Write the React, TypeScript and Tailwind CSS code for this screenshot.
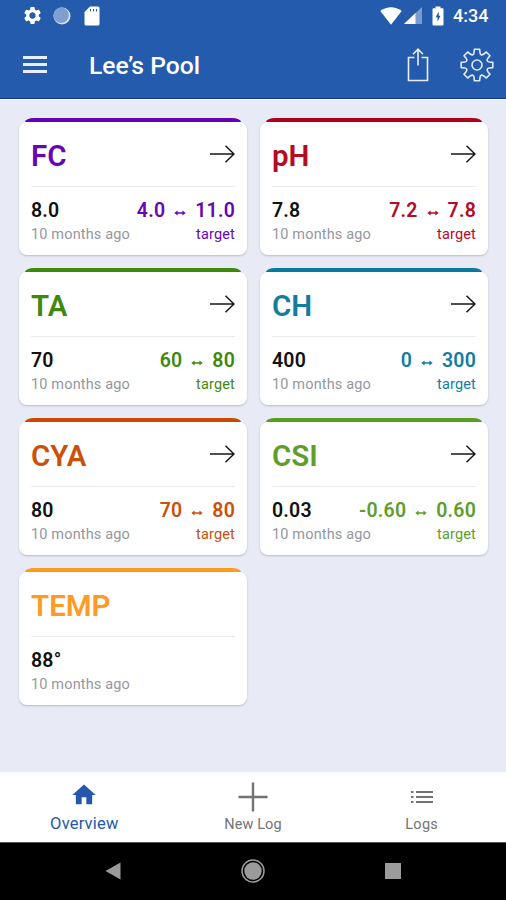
import { MdSettings, MdHome } from "react-icons/md";

type Reading = {
  name: string;
  value: string;
  low?: string;
  high?: string;
  text: string;
  bar: string;
};

const readings: Reading[] = [
  { name: "FC", value: "8.0", low: "4.0", high: "11.0", text: "text-[#6707b2]", bar: "bg-[#6500b4]" },
  { name: "pH", value: "7.8", low: "7.2", high: "7.8", text: "text-[#b50b25]", bar: "bg-[#b1001c]" },
  { name: "TA", value: "70", low: "60", high: "80", text: "text-[#3f890f]", bar: "bg-[#3c8a0a]" },
  { name: "CH", value: "400", low: "0", high: "300", text: "text-[#127d9f]", bar: "bg-[#087a9f]" },
  { name: "CYA", value: "80", low: "70", high: "80", text: "text-[#cb500b]", bar: "bg-[#c94a00]" },
  { name: "CSI", value: "0.03", low: "-0.60", high: "0.60", text: "text-[#609d2b]", bar: "bg-[#5a9d20]" },
  { name: "TEMP", value: "88°", text: "text-[#ff9a24]", bar: "bg-[#ff9a1c]" },
];

function ArrowIcon() {
  return (
    <svg width="26" height="20" viewBox="0 0 26 20" fill="none" stroke="#161616" strokeWidth="1.5">
      <path d="M1 10H25M16.5 1.8L25 10L16.5 18.2" />
    </svg>
  );
}

function ShareIcon() {
  return (
    <svg width="24" height="36" viewBox="0 0 24 36" fill="none" stroke="#e9effa" strokeWidth="1.6">
      <path d="M8.5 10.5H2.5V33.5H21.5V10.5H15.5M12 18.5V2.5M7 7.2L12 2.2L17 7.2" />
    </svg>
  );
}

function GearIcon() {
  return (
    <svg width="34" height="34" viewBox="-17 -17 34 34" fill="none" stroke="#e2eaf8" strokeWidth="1.6" strokeLinejoin="round">
      <path d="M-2.6 -15.8H2.6L3 -12.2Q3.7 -9 6.4 -10.7L9.3 -13L13 -9.3L10.7 -6.4Q9 -3.7 12.2 -3L15.8 -2.6V2.6L12.2 3Q9 3.7 10.7 6.4L13 9.3L9.3 13L6.4 10.7Q3.7 9 3 12.2L2.6 15.8H-2.6L-3 12.2Q-3.7 9 -6.4 10.7L-9.3 13L-13 9.3L-10.7 6.4Q-9 3.7 -12.2 3L-15.8 2.6V-2.6L-12.2 -3Q-9 -3.7 -10.7 -6.4L-13 -9.3L-9.3 -13L-6.4 -10.7Q-3.7 -9 -3 -12.2Z" />
      <circle r="5" />
    </svg>
  );
}

function StatusBar() {
  return (
    <div className="flex h-[31px] items-center pl-[22px] pr-[18px] text-white">
      <MdSettings size={21} />
      <svg className="ml-[10px]" width="18" height="18" viewBox="0 0 18 18">
        <circle cx="9" cy="9" r="8.5" fill="#d9e3f4" />
        <circle cx="8.2" cy="8.2" r="7.7" fill="#7f9fd2" />
      </svg>
      <svg className="ml-[13px]" width="16" height="20" viewBox="0 0 16 20">
        <path d="M6 0.5H14Q15.5 0.5 15.5 2V18Q15.5 19.5 14 19.5H2Q0.5 19.5 0.5 18V6Z" fill="#fff" />
        <path d="M6.5 3V5.5M9.5 3V5.5M12.5 3V5.5" stroke="#255bad" strokeWidth="1.1" />
      </svg>
      <svg className="ml-auto" width="22" height="18" viewBox="0 0 22 18">
        <path d="M0.3 4Q11 -3.5 21.7 4L11 17.7Z" fill="#fff" />
      </svg>
      <svg className="ml-[2px]" width="18" height="17" viewBox="0 0 18 17">
        <path d="M0 17L18 0V17Z" fill="#7b9bcd" />
        <path d="M0 17L11.5 6V17Z" fill="#fff" />
      </svg>
      <svg className="ml-[10px]" width="12" height="20" viewBox="0 0 12 20">
        <path d="M3.5 0.5H8.5V2.2H10.5Q11.5 2.2 11.5 3.2V18.5Q11.5 19.5 10.5 19.5H1.5Q0.5 19.5 0.5 18.5V3.2Q0.5 2.2 1.5 2.2H3.5Z" fill="#fff" />
        <path d="M6.8 5.5L3.6 11.2H5.5V15.5L8.6 9.8H6.8Z" fill="#255bad" />
      </svg>
      <span className="ml-[9px] w-[35px] whitespace-nowrap text-[18px] leading-none font-medium">4:34</span>
    </div>
  );
}

function ReadingCard({ name, value, low, high, text, bar }: Reading) {
  return (
    <div className="h-[137px]">
      <div className={`mx-[6px] h-1 rounded-t-[9px_4px] ${bar}`} />
      <div className="h-[133px] rounded-lg bg-white px-3 shadow-[0_1px_2px_rgba(60,65,90,0.28)]">
        <div className="flex h-[65px] items-center justify-between border-b border-[#ebebed]">
          <h2 className={`pt-[6px] text-[29.5px] leading-none font-semibold ${text}`}>{name}</h2>
          {low && <ArrowIcon />}
        </div>
        <div className="mt-[13px] flex justify-between text-[19.5px] leading-[22px] font-semibold tracking-[0.2px]">
          <span className="text-[#111]">{value}</span>
          {low && (
            <span className={`flex ${text}`}>
              {low}
              <svg className="mx-[9px] mt-[9px]" width="12" height="8" viewBox="0 0 12 8" fill="currentColor">
                <path d="M0.3 4L3.6 1.4V3.3H8.4V1.4L11.7 4L8.4 6.6V4.7H3.6V6.6Z" />
              </svg>
              {high}
            </span>
          )}
        </div>
        <div className="mt-1 flex justify-between text-[14.5px] leading-[18px] tracking-[0.15px]">
          <span className="text-[#9696a2]">10 months ago</span>
          {low && <span className={text}>target</span>}
        </div>
      </div>
    </div>
  );
}

export default function App() {
  return (
    <div className="flex h-[900px] w-[506px] flex-col overflow-hidden bg-[#e8ebf5] font-['Roboto',sans-serif]">
      {/* Header */}
      <header className="h-[99px] shrink-0 border-b border-[#0d3696] bg-[#255bad]">
        <StatusBar />
        <div className="flex h-[67px] items-center pl-[23px] pr-[12px]">
          <div className="flex flex-col gap-1">
            <div className="h-[3px] w-6 bg-[#e9effa]" />
            <div className="h-[3px] w-6 bg-[#e9effa]" />
            <div className="h-[3px] w-6 bg-[#e9effa]" />
          </div>
          <h1 className="ml-[42px] pt-[3px] text-[24.7px] leading-none font-medium text-white">Lee’s Pool</h1>
          <div className="ml-auto flex items-center gap-[30px]">
            <ShareIcon />
            <GearIcon />
          </div>
        </div>
      </header>

      {/* Readings */}
      <main className="grid flex-1 grid-cols-[228px_228px] content-start gap-x-[13px] gap-y-[13px] border-t border-white pl-[19px] pt-[18px]">
        {readings.map((reading) => (
          <ReadingCard key={reading.name} {...reading} />
        ))}
      </main>

      {/* Tabs */}
      <nav className="grid h-[70px] shrink-0 grid-cols-3 bg-white text-center text-[#737373]">
        <div className="flex flex-col items-center text-[#2457ad]">
          <MdHome className="mt-[9px]" size={28} />
          <span className="mt-[5px] text-[16.5px] leading-[19px] tracking-[0.2px]">Overview</span>
        </div>
        <div className="flex flex-col items-center">
          <svg className="mt-[10px]" width="30" height="30" viewBox="0 0 30 30" stroke="#737373" strokeWidth="2.4">
            <path d="M0.5 15H29.5M15 0.5V29.5" />
          </svg>
          <span className="mt-[4px] text-[14.5px] leading-[18px] tracking-[0.1px]">New Log</span>
        </div>
        <div className="flex flex-col items-center">
          <svg className="mt-[18px]" width="22" height="14" viewBox="0 0 22 14" stroke="#737373" strokeWidth="2">
            <path d="M0 2H2.5M5 2H22M0 7H2.5M5 7H22M0 12H2.5M5 12H22" />
          </svg>
          <span className="mt-[12px] text-[14.5px] leading-[18px] tracking-[0.3px]">Logs</span>
        </div>
      </nav>

      {/* Android navigation */}
      <footer className="flex h-[58px] shrink-0 items-center justify-between border-t border-[#555] bg-black px-[105px] pb-[2px]">
        <svg width="16" height="18" viewBox="0 0 16 18">
          <path d="M0.5 9L15.5 0.5V17.5Z" fill="#9b9b9b" />
        </svg>
        <svg width="24" height="24" viewBox="0 0 24 24">
          <circle cx="12" cy="12" r="11" fill="none" stroke="#9b9b9b" strokeWidth="1.5" />
          <circle cx="12" cy="12" r="8.7" fill="#9b9b9b" />
        </svg>
        <div className="h-4 w-4 bg-[#9b9b9b]" />
      </footer>
    </div>
  );
}
